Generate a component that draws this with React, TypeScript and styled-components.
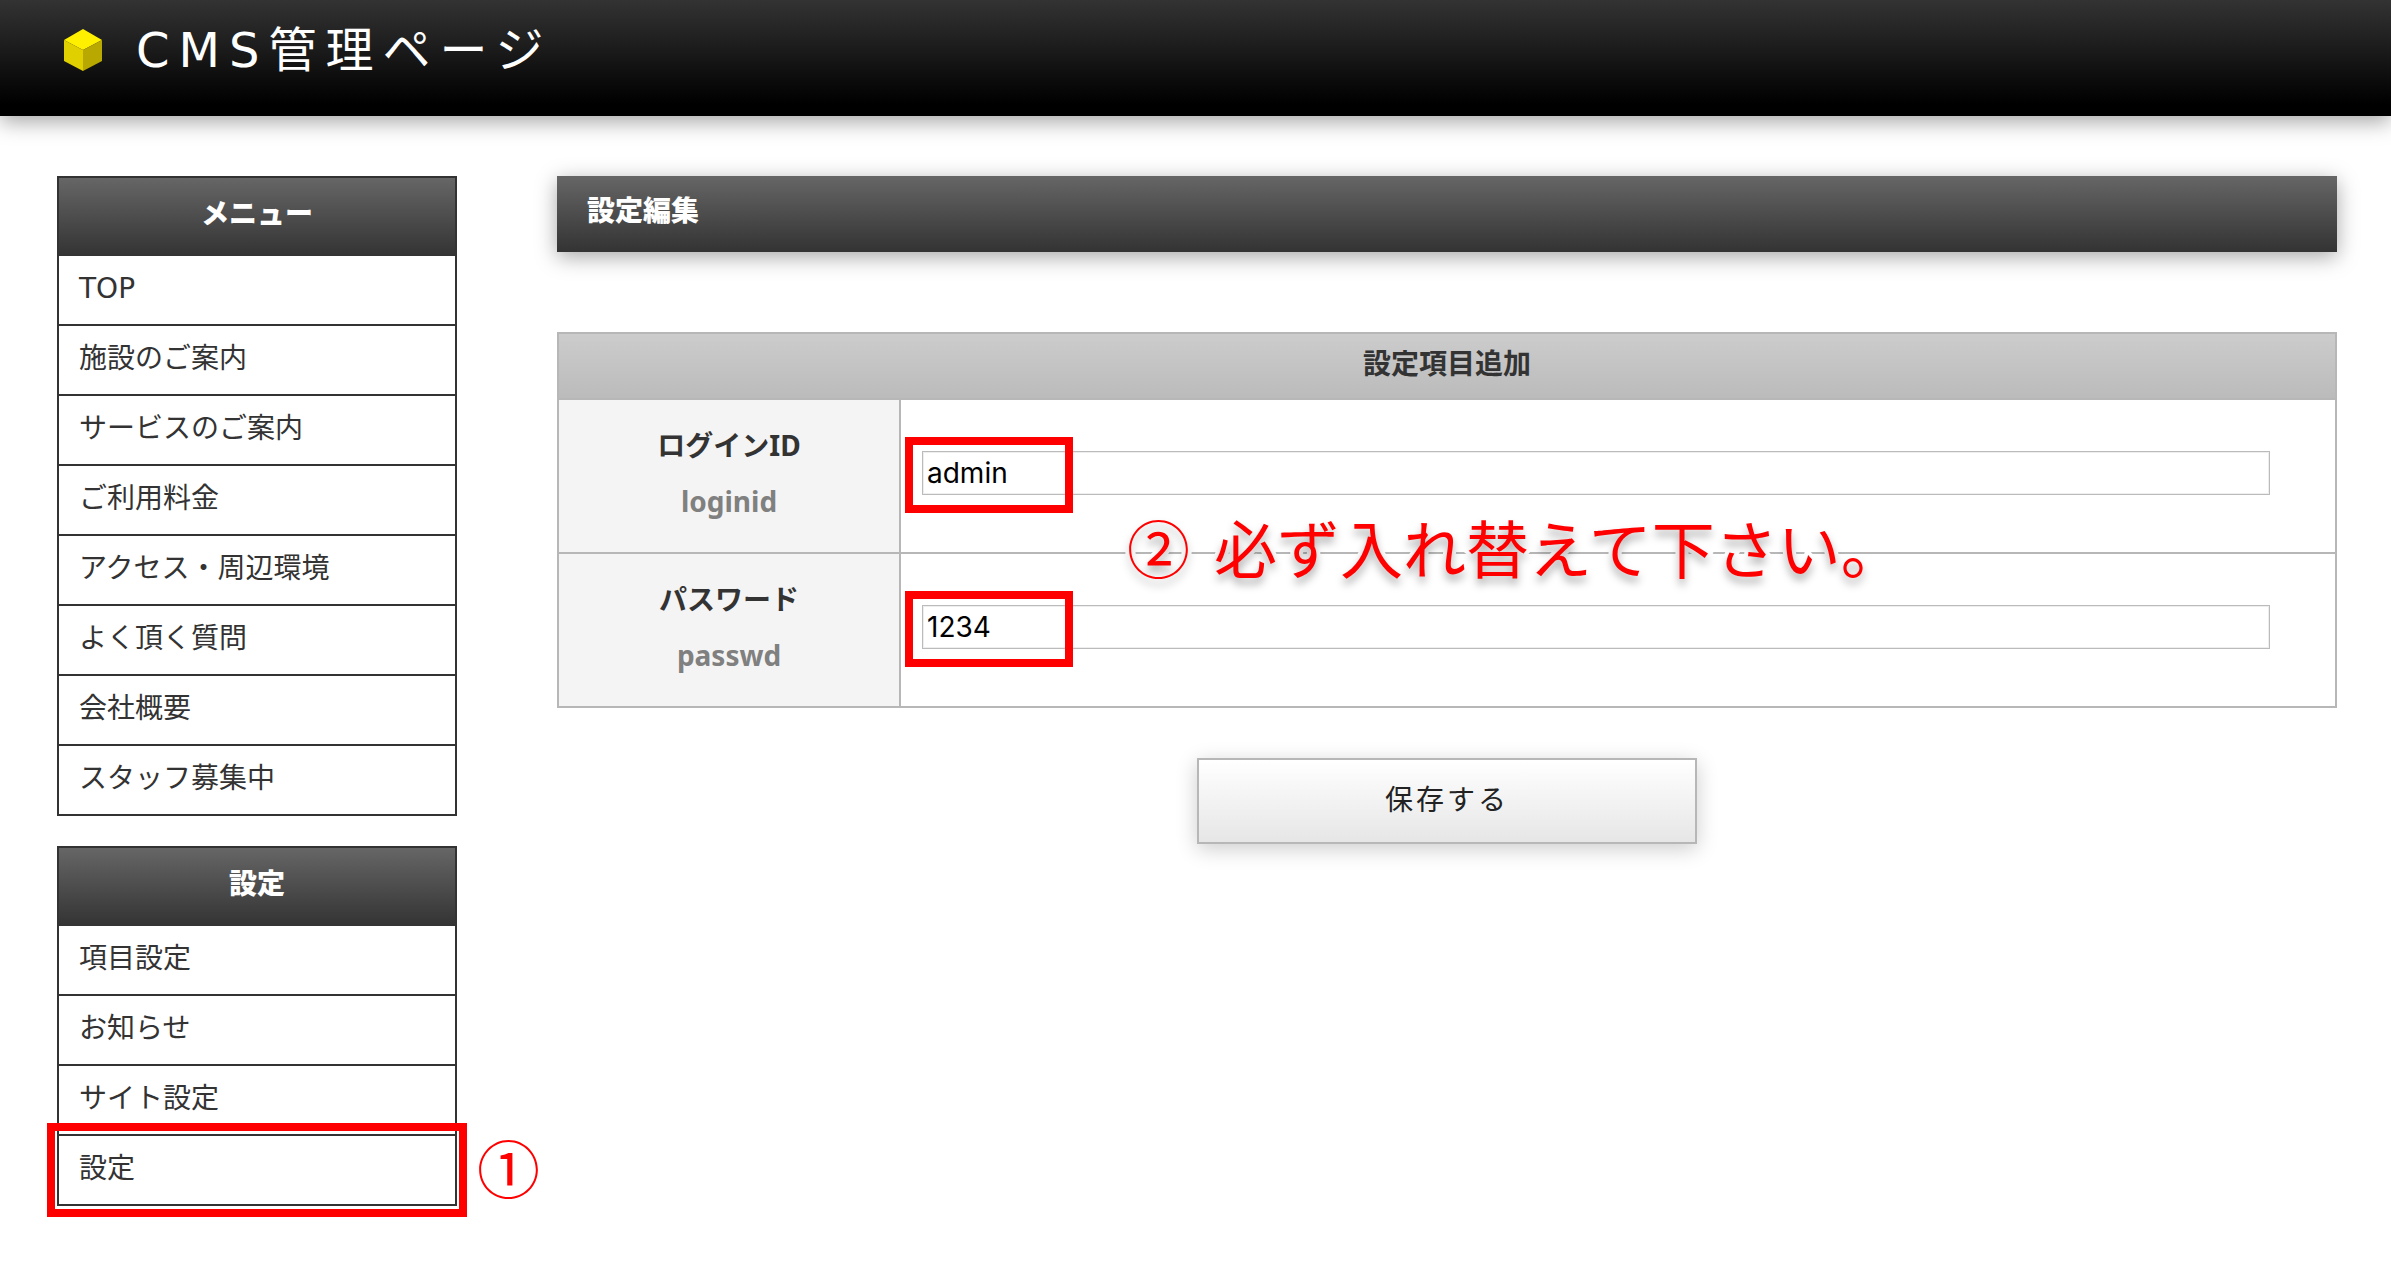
import React, { useState } from "react";
import styled, { createGlobalStyle } from "styled-components";

const textFont = `"DejaVu Sans", "Noto Sans CJK JP", sans-serif`;
const boldFont = `"Noto Sans", "Noto Sans CJK JP", sans-serif`;

const GlobalStyle = createGlobalStyle`
  * { box-sizing: border-box; }
  body {
    margin: 0;
    background: #fff;
    color: #333;
    font-family: ${textFont};
    font-size: 28px;
    line-height: 56px;
  }
`;

const Header = styled.header`
  display: flex;
  align-items: center;
  gap: 32px;
  height: 116px;
  padding: 0 62px 16px;
  background: linear-gradient(#333, #000 90%);
  box-shadow: 0 6px 20px rgba(0, 0, 0, 0.35);
`;

const Logo = styled.svg`
  width: 42px;
  height: 44px;
`;

const SiteTitle = styled.h1`
  margin: 0;
  color: #fff;
  font-size: 48px;
  font-weight: 400;
  line-height: 64px;
  letter-spacing: 9px;
`;

const Page = styled.div`
  display: flex;
  align-items: flex-start;
  gap: 100px;
  padding: 60px 54px 60px 57px;
`;

const Sidebar = styled.nav`
  display: flex;
  flex: none;
  flex-direction: column;
  gap: 30px;
  width: 400px;
`;

const MenuBox = styled.section`
  border: 2px solid #333;
  border-bottom: 0;
`;

const MenuTitle = styled.h2`
  margin: 0;
  padding: 7px 0 15px;
  background: linear-gradient(#666, #333);
  color: #fff;
  font-family: ${boldFont};
  font-size: 28px;
  font-weight: 800;
  text-align: center;
`;

const MenuList = styled.ul`
  margin: 0;
  padding: 0;
  list-style: none;
`;

const MenuItem = styled.li`
  position: relative;
  border-bottom: 2px solid #333;
`;

const MenuLink = styled.a`
  display: block;
  padding: 5px 20px 7px;
  color: inherit;
  text-decoration: none;
`;

const ItemMark = styled.span`
  position: absolute;
  inset: -13px -12px;
  border: 8px solid #f00;
  pointer-events: none;
`;

const Note = styled.span`
  position: absolute;
  color: #f00;
  font-family: "Noto Sans CJK JP", sans-serif;
  font-size: 63px;
  font-weight: 400;
  line-height: 64px;
  white-space: pre;
  pointer-events: none;
`;

const StepOne = styled(Note)`
  left: calc(100% + 22px);
  top: -2px;
`;

const StepTwo = styled(Note)`
  left: 570px;
  top: 182px;
  display: flex;
  gap: 24px;
  -webkit-text-stroke: 8px #fff;
  paint-order: stroke fill;
  text-shadow: 0 6px 8px rgba(0, 0, 0, 0.35);
`;

const Main = styled.main`
  flex: 1;
  min-width: 0;
`;

const PageTitle = styled.h2`
  margin: 0 0 80px;
  padding: 6px 30px 14px;
  background: linear-gradient(#666, #333);
  box-shadow: 0 5px 20px rgba(0, 0, 0, 0.35);
  color: #fff;
  font-family: ${boldFont};
  font-size: 28px;
  font-weight: 800;
`;

const Form = styled.form`
  position: relative;
`;

const Table = styled.table`
  width: 100%;
  border-collapse: collapse;
  border: 2px solid #b7b7b7;
`;

const TableHead = styled.th`
  padding: 1px 0 7px;
  border: 2px solid #b7b7b7;
  background: linear-gradient(#ccc, #bbb);
  font-family: ${boldFont};
`;

const NameCell = styled.th`
  width: 342px;
  padding: 17px 0 23px;
  border: 2px solid #b7b7b7;
  background: #f4f4f4;
  font-family: ${boldFont};
`;

const NameLabel = styled.label`
  display: block;
`;

const NameKey = styled.span`
  display: block;
  color: #808080;
`;

const ValueCell = styled.td`
  padding: 0 65px 6px 21px;
  border: 2px solid #b7b7b7;
`;

const Field = styled.div`
  position: relative;
  display: flex;
`;

const Input = styled.input`
  width: 100%;
  height: 44px;
  padding: 0 4px;
  border: 1px solid #bbb;
  border-radius: 0;
  outline: 0;
  background: #fff;
  box-shadow: inset 0 0 0 1px #eee;
  color: #000;
  font-family: Inter, sans-serif;
  font-size: 28px;
`;

const FieldMark = styled.span`
  position: absolute;
  left: -17px;
  top: -14px;
  width: 168px;
  height: 76px;
  border: 8px solid #f00;
  pointer-events: none;
`;

const SaveButton = styled.button`
  display: block;
  width: 500px;
  margin: 50px auto 0;
  padding: 13px 0;
  border: 2px solid #b7b7b7;
  background: linear-gradient(#fff, #e6e6e6);
  box-shadow: 0 5px 20px rgba(0, 0, 0, 0.2);
  color: #222;
  font-family: ${textFont};
  font-size: 28px;
  line-height: 56px;
  letter-spacing: 3px;
`;

const menus = [
  {
    title: "メニュー",
    items: [
      "TOP",
      "施設のご案内",
      "サービスのご案内",
      "ご利用料金",
      "アクセス・周辺環境",
      "よく頂く質問",
      "会社概要",
      "スタッフ募集中",
    ],
  },
  { title: "設定", items: ["項目設定", "お知らせ", "サイト設定", "設定"] },
];

const fields = [
  { id: "loginid", label: "ログインID", value: "admin" },
  { id: "passwd", label: "パスワード", value: "1234" },
];

function Menu({ title, items }: { title: string; items: string[] }) {
  return (
    <MenuBox>
      <MenuTitle>{title}</MenuTitle>
      <MenuList>
        {items.map((item) => (
          <MenuItem key={item}>
            <MenuLink href="#">{item}</MenuLink>
            {item === "設定" && (
              <>
                <ItemMark />
                <StepOne>①</StepOne>
              </>
            )}
          </MenuItem>
        ))}
      </MenuList>
    </MenuBox>
  );
}

function SettingField({ id, label, value }: { id: string; label: string; value: string }) {
  const [text, setText] = useState(value);
  return (
    <tr>
      <NameCell scope="row">
        <NameLabel htmlFor={id}>{label}</NameLabel>
        <NameKey>{id}</NameKey>
      </NameCell>
      <ValueCell>
        <Field>
          <Input id={id} type="text" value={text} onChange={(e) => setText(e.target.value)} />
          <FieldMark />
        </Field>
      </ValueCell>
    </tr>
  );
}

export default function App() {
  return (
    <>
      <GlobalStyle />
      <Header>
        <Logo viewBox="0 0 42 44" aria-hidden="true">
          <path d="M21 1 40 12 21 22 2 12Z" fill="#fff000" />
          <path d="M2 12 21 22V43L2 33Z" fill="#e0d000" />
          <path d="M40 12 21 22V43L40 33Z" fill="#b8a800" />
        </Logo>
        <SiteTitle>CMS管理ページ</SiteTitle>
      </Header>
      <Page>
        <Sidebar>
          {menus.map((menu) => (
            <Menu key={menu.title} {...menu} />
          ))}
        </Sidebar>
        <Main>
          <PageTitle>設定編集</PageTitle>
          <Form onSubmit={(e) => e.preventDefault()}>
            <Table>
              <thead>
                <tr>
                  <TableHead colSpan={2}>設定項目追加</TableHead>
                </tr>
              </thead>
              <tbody>
                {fields.map((field) => (
                  <SettingField key={field.id} {...field} />
                ))}
              </tbody>
            </Table>
            <StepTwo>
              <span>②</span>
              <span>必ず入れ替えて下さい。</span>
            </StepTwo>
            <SaveButton type="submit">保存する</SaveButton>
          </Form>
        </Main>
      </Page>
    </>
  );
}
